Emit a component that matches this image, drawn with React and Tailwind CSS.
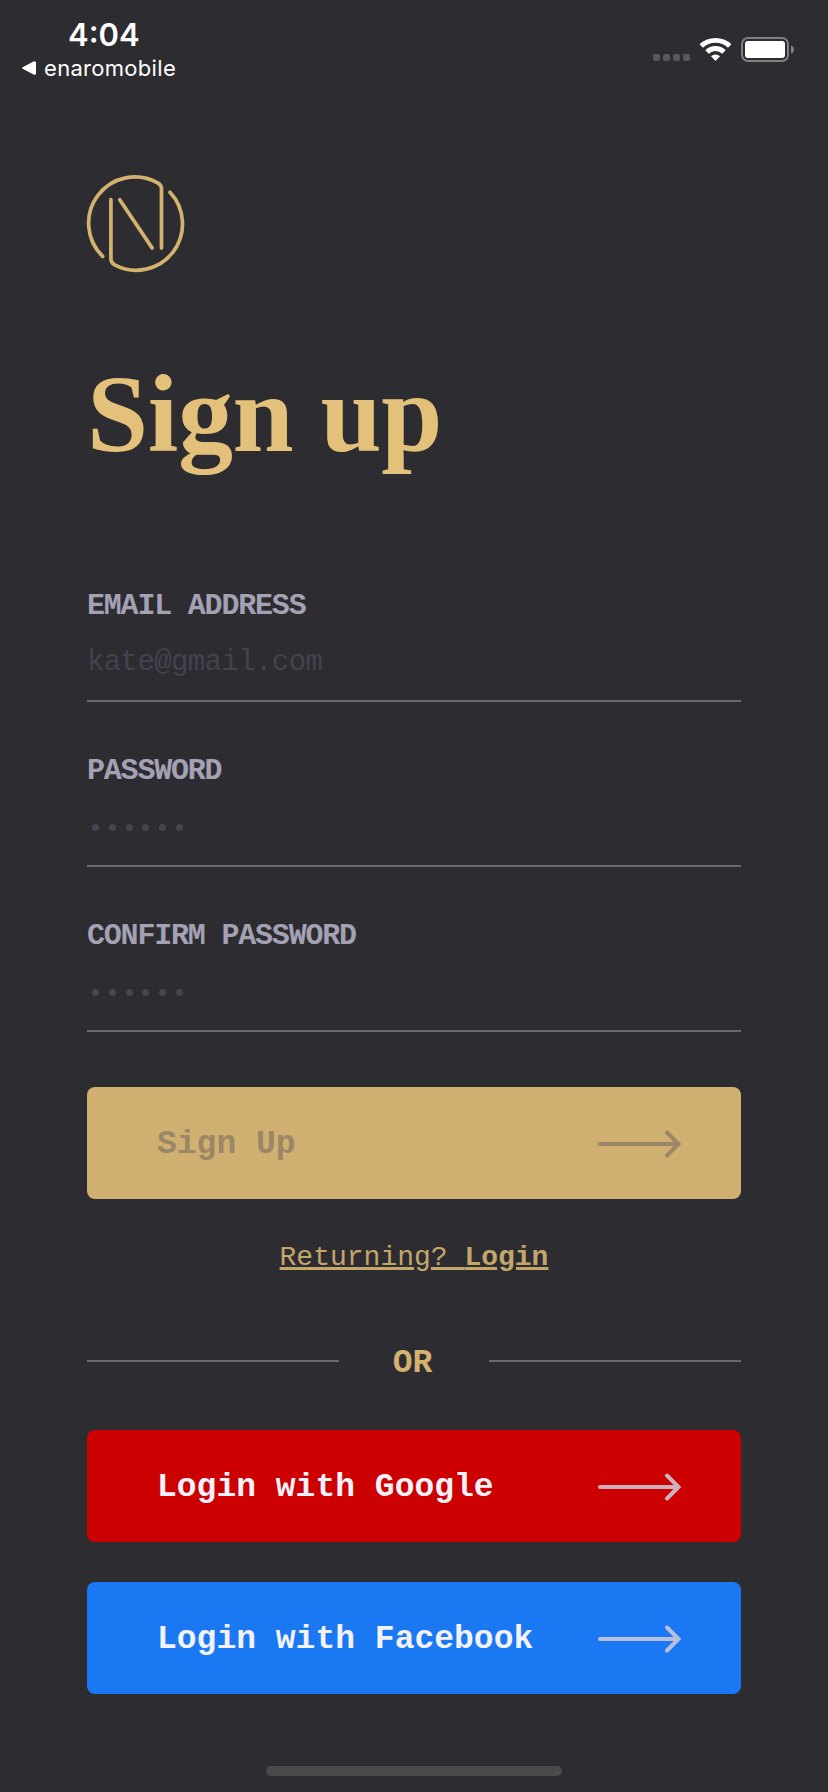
const MONO = "font-['Liberation_Mono',monospace]";

function StatusBar() {
  return (
    <header className="flex h-[175px] items-start justify-between pl-[22px] pr-[34px] pt-4 font-['Inter',sans-serif] text-white">
      <div>
        <div className="pl-[46px] text-[31px] font-semibold leading-[38px]">4:04</div>
        <div className="flex items-center gap-[8px]">
          <svg width="14" height="14" viewBox="0 0 14 14" fill="currentColor">
            <path d="M0.6 6.2 12 0.3Q14 0 14 1.8V12.2Q14 14 12 13.7L0.6 7.8Q-0.3 7 0.6 6.2Z" />
          </svg>
          <span className="text-[22px] leading-7 tracking-[0.3px]">enaromobile</span>
        </div>
      </div>
      <div className="flex items-end pt-[21px]">
        <div className="mb-px mr-[9px] flex gap-[3px]">
          {[0, 1, 2, 3].map((i) => (
            <span key={i} className="size-[7px] shrink-0 rounded-[2px] bg-[#59585d]" />
          ))}
        </div>
        <svg className="mr-[9px]" width="33" height="25" viewBox="0 0 33 25" fill="currentColor">
          <path d="M0.6 7.3A23 23 0 0 1 32.4 7.3L29 10.7A18 18 0 0 0 4 10.7Z" />
          <path d="M6.3 13.2A14.6 14.6 0 0 1 26.7 13.2L23.2 16.7A9.6 9.6 0 0 0 9.8 16.7Z" />
          <path d="M12 19.2A6.6 6.6 0 0 1 21 19.2L16.5 24Z" />
        </svg>
        <svg width="53" height="25" viewBox="0 0 53 25">
          <rect x="1" y="1" width="46" height="23" rx="6" fill="none" stroke="#808084" strokeWidth="2" />
          <rect x="4" y="4" width="40" height="17" rx="3" fill="#fff" />
          <path d="M50 8.5Q53 9.5 53 12.5T50 16.5Z" fill="#808084" />
        </svg>
      </div>
    </header>
  );
}

function Logo() {
  return (
    <svg className="overflow-visible" width="98" height="98" viewBox="-0.7 -0.7 100 100" fill="none" stroke="#d3b26f" strokeWidth="3.8" strokeLinecap="round">
      <path d="M15.3 82.3A47.2 47.2 0 0 1 71.5 7.4Q75.3 9.8 75.3 13.5V73.7" />
      <path d="M84 17A47.2 47.2 0 0 1 27.5 91Q23.7 88.8 23.7 85V24.5" />
      <path d="M32.7 24.5 65.7 73.7" />
    </svg>
  );
}

function Field({ label, type, placeholder }) {
  return (
    <label className="block border-b-2 border-[#6b6a70] pb-[19px]">
      <span className="block text-[30px] font-bold leading-9 tracking-[-1.2px] text-[#a3a1b3]">{label}</span>
      {type === "password" ? (
        <span className="mt-[21px] flex h-9 items-center gap-[9.8px] pb-px pl-[5px]">
          {[0, 1, 2, 3, 4, 5].map((i) => (
            <span key={i} className="size-[7px] rounded-full bg-[#474551]" />
          ))}
        </span>
      ) : (
        <span className="mt-[21px] block text-[29px] leading-9 tracking-[-0.6px] text-[#44424e]">{placeholder}</span>
      )}
    </label>
  );
}

function ActionButton({ children, className, arrow }) {
  return (
    <button className={`flex h-28 w-full items-center justify-between rounded-lg pl-[70px] pr-[59px] pt-0.5 ${className}`}>
      <span className="pt-0.5 text-[33px] font-bold leading-10">{children}</span>
      <svg className={arrow} width="84" height="28" viewBox="0 0 84 28" fill="none" stroke="currentColor" strokeWidth="4" strokeLinecap="round">
        <path d="M2 14H79M69 2.5 80.5 14 69 25.5" />
      </svg>
    </button>
  );
}

export default function App() {
  return (
    <div className="flex h-[1792px] w-[828px] flex-col overflow-hidden bg-[#2d2c31]">
      <StatusBar />
      <main className={`flex flex-col px-[87px] ${MONO}`}>
        <Logo />
        <h1 className="mt-[81px] font-['Liberation_Serif',serif] text-[110px] font-bold leading-[120px] tracking-[-0.4px] text-[#e4c17a]">
          Sign up
        </h1>
        <form className="mt-[114px] flex flex-col gap-[51px]">
          <Field label="EMAIL ADDRESS" placeholder="kate@gmail.com" />
          <Field label="PASSWORD" type="password" />
          <Field label="CONFIRM PASSWORD" type="password" />
        </form>
        <div className="mt-[55px]">
          <ActionButton className="bg-[#cfb070] text-[#9b8766]" arrow="text-[#9b8766]">Sign Up</ActionButton>
        </div>
        <a className="mt-[41px] self-center whitespace-pre text-[28px] leading-9 text-[#c4a66a] underline decoration-[3px] underline-offset-[2px]">
          Returning? <b>Login</b>
        </a>
        <div className="mt-[68px] flex h-10 items-center justify-between">
          <span className="mb-1.5 h-0.5 w-[252px] bg-[#6b6a70]" />
          <span className="pr-[3px] text-[33px] font-bold leading-10 text-[#d3b26f]">OR</span>
          <span className="mb-1.5 h-0.5 w-[252px] bg-[#6b6a70]" />
        </div>
        <div className="mt-[46px] flex flex-col gap-10">
          <ActionButton className="bg-[#cc0000] text-[#f3f1fa]" arrow="text-[#ccb1c1]">Login with Google</ActionButton>
          <ActionButton className="bg-[#1a78f2] text-[#f3f1fa]" arrow="text-[#b8c0dc]">Login with Facebook</ActionButton>
        </div>
      </main>
      <div className="mt-[72px] h-[10px] w-[296px] shrink-0 self-center rounded-full bg-[#4a4a4a]" />
    </div>
  );
}
